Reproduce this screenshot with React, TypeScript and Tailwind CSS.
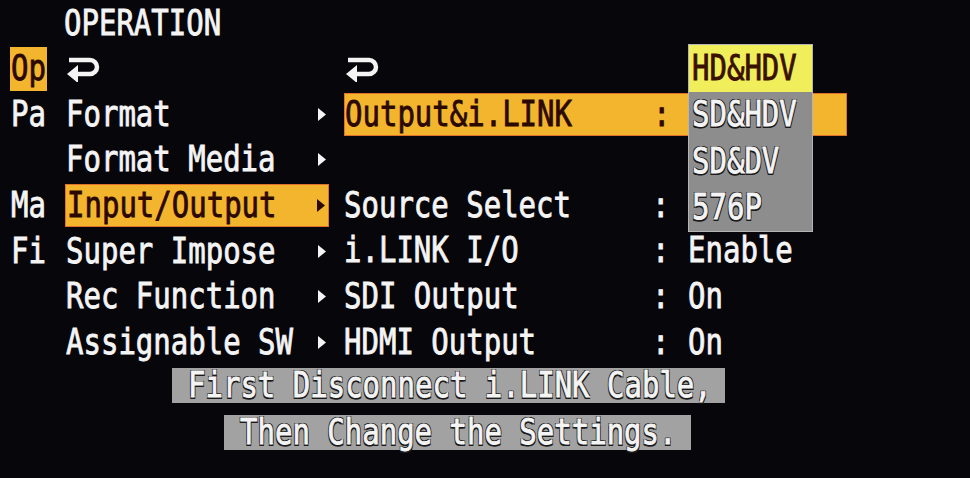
import React from 'react';

const outline =
  '[text-shadow:1px_1px_0_#1a1a1a,-1px_-1px_0_#1a1a1a,1px_-1px_0_#1a1a1a,-1px_1px_0_#1a1a1a]';

const T: React.FC<{ children: React.ReactNode; className?: string }> = ({ children, className = '' }) => (
  <span
    className={`inline-block scale-y-[1.25] whitespace-pre leading-none [-webkit-text-stroke:0.7px_currentColor] ${className}`}
  >
    {children}
  </span>
);

const Arrow: React.FC<{ dark?: boolean }> = ({ dark }) => (
  <svg width="8" height="13" viewBox="0 0 8 13" className="shrink-0">
    <polygon points="0,0 8,6.5 0,13" fill={dark ? '#2b0800' : '#f4f4f4'} />
  </svg>
);

const ReturnIcon: React.FC = () => (
  <svg width="34" height="26" viewBox="0 0 34 26" className="shrink-0">
    <path d="M3 4 H24 A7 7 0 0 1 24 18 H10" fill="none" stroke="#f4f4f4" strokeWidth="4.5" />
    <polygon points="1,18 12,9 12,27" fill="#f4f4f4" />
  </svg>
);

interface Row {
  stub?: string;
  stubActive?: boolean;
  left?: string;
  leftReturn?: boolean;
  leftActive?: boolean;
  leftArrow?: boolean;
  right?: string;
  rightReturn?: boolean;
  rightActive?: boolean;
  value?: string;
  colon?: boolean;
}

const rows: Row[] = [
  { stub: 'Op', stubActive: true, leftReturn: true, rightReturn: true },
  { stub: 'Pa', left: 'Format', leftArrow: true, right: 'Output&i.LINK', rightActive: true, colon: true },
  { left: 'Format Media', leftArrow: true },
  { stub: 'Ma', left: 'Input/Output', leftArrow: true, leftActive: true, right: 'Source Select', colon: true },
  { stub: 'Fi', left: 'Super Impose', leftArrow: true, right: 'i.LINK I/O', colon: true, value: 'Enable' },
  { left: 'Rec Function', leftArrow: true, right: 'SDI Output', colon: true, value: 'On' },
  { left: 'Assignable SW', leftArrow: true, right: 'HDMI Output', colon: true, value: 'On' },
];

const options = ['HD&HDV', 'SD&HDV', 'SD&DV', '576P'];

export default function App() {
  return (
    <div className="relative w-[970px] h-[478px] overflow-hidden bg-[#07060b] text-[#f4f4f4] font-['DejaVu_Sans_Mono',monospace] text-[29px] font-normal">
      {/* Title */}
      <div className="h-[46px] flex items-center pl-[64px]">
        <T>OPERATION</T>
      </div>

      {/* Menu rows */}
      {rows.map((r, i) => (
        <div key={i} className="flex h-[45.6px]">
          <div className="w-[47px] pl-[10px] flex py-[1px]">
            {r.stub && (
              <div
                className={`w-[37px] flex items-center pl-[1px] ${
                  r.stubActive ? 'bg-[#f3b52e] text-[#2b0800]' : ''
                }`}
              >
                <T>{r.stub}</T>
              </div>
            )}
          </div>

          <div
            className={`ml-[18px] w-[264px] my-[1px] flex items-center justify-between pl-[1px] pr-[3px] ${
              r.leftActive ? 'bg-[#f3b52e] text-[#2b0800] border border-[#e0702a]' : ''
            }`}
          >
            {r.leftReturn ? <ReturnIcon /> : <T>{r.left ?? ''}</T>}
            {r.leftArrow && <Arrow dark={r.leftActive} />}
          </div>

          <div
            className={`ml-[15px] w-[503px] my-[1px] flex items-center ${
              r.rightActive ? 'bg-[#f3b52e] text-[#2b0800] border border-[#e0702a]' : ''
            }`}
          >
            {r.rightReturn ? (
              <div className="pl-[1px]">
                <ReturnIcon />
              </div>
            ) : (
              <>
                <div className="w-[308px]">
                  <T>{r.right ?? ''}</T>
                </div>
                <div className="w-[36px]">{r.colon && <T>:</T>}</div>
                <div>{r.value && <T>{r.value}</T>}</div>
              </>
            )}
          </div>
        </div>
      ))}

      {/* Warning messages */}
      <div className="mt-[3px] flex flex-col gap-[12px]">
        <div className={`ml-[172px] w-[553px] h-[35px] bg-[#a2a2a2] flex items-center pl-[16px] ${outline}`}>
          <T>First Disconnect i.LINK Cable,</T>
        </div>
        <div className={`ml-[224px] w-[467px] h-[35px] bg-[#a2a2a2] flex items-center pl-[16px] ${outline}`}>
          <T>Then Change the Settings.</T>
        </div>
      </div>

      {/* Option popup */}
      <div className="absolute left-[688px] top-[44px] w-[125px] bg-[#8d8d8d] border border-[#b4b4b4] flex flex-col">
        {options.map((o, i) => (
          <div
            key={o}
            className={`h-[46.5px] flex items-center pl-[3px] ${
              i === 0 ? 'bg-[#f0ee5a] text-[#3a1000]' : outline
            }`}
          >
            <T>{o}</T>
          </div>
        ))}
      </div>
    </div>
  );
}
